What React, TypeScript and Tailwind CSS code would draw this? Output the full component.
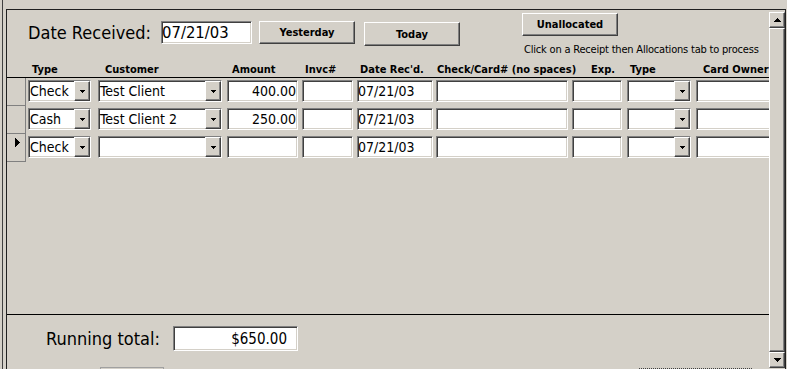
import React from "react";

const sunken =
  "bg-white border border-t-[#808080] border-l-[#808080] border-r-white border-b-white shadow-[inset_1px_1px_0_#404040,inset_-1px_-1px_0_#d4d0c8]";
const raised =
  "bg-[#d4d0c8] border border-t-white border-l-white border-r-[#404040] border-b-[#404040] shadow-[inset_-1px_-1px_0_#808080]";

function SmallDown() {
  return (
    <svg width="5" height="3" viewBox="0 0 5 3" className="block">
      <rect x="0" y="0" width="5" height="1" fill="#000" />
      <rect x="1" y="1" width="3" height="1" fill="#000" />
      <rect x="2" y="2" width="1" height="1" fill="#000" />
    </svg>
  );
}

function ScrollArrow({ up }: { up?: boolean }) {
  return (
    <svg width="7" height="4" viewBox="0 0 7 4" className="block">
      {up ? (
        <>
          <rect x="3" y="0" width="1" height="1" fill="#000" />
          <rect x="2" y="1" width="3" height="1" fill="#000" />
          <rect x="1" y="2" width="5" height="1" fill="#000" />
          <rect x="0" y="3" width="7" height="1" fill="#000" />
        </>
      ) : (
        <>
          <rect x="0" y="0" width="7" height="1" fill="#000" />
          <rect x="1" y="1" width="5" height="1" fill="#000" />
          <rect x="2" y="2" width="3" height="1" fill="#000" />
          <rect x="3" y="3" width="1" height="1" fill="#000" />
        </>
      )}
    </svg>
  );
}

function Pointer() {
  return (
    <svg width="5" height="9" viewBox="0 0 5 9" className="block">
      <rect x="0" y="0" width="1" height="9" fill="#000" />
      <rect x="1" y="1" width="1" height="7" fill="#000" />
      <rect x="2" y="2" width="1" height="5" fill="#000" />
      <rect x="3" y="3" width="1" height="3" fill="#000" />
      <rect x="4" y="4" width="1" height="1" fill="#000" />
    </svg>
  );
}

function Field({
  className,
  children,
  right,
}: {
  className: string;
  children?: React.ReactNode;
  right?: boolean;
}) {
  return (
    <div
      className={`${sunken} ${className} shrink-0 mt-[2px] h-[22px] flex items-center text-[14px] leading-[18px] whitespace-nowrap overflow-hidden ${
        right ? "justify-end pr-px" : "pl-0"
      }`}
    >
      {children}
    </div>
  );
}

function Combo({ className, value }: { className: string; value?: string }) {
  return (
    <div
      className={`${sunken} ${className} shrink-0 mt-[2px] h-[22px] flex items-stretch text-[14px] leading-[18px] whitespace-nowrap`}
    >
      <div className="flex-1 flex items-center pl-px overflow-hidden">{value}</div>
      <div className={`${raised} w-[16px] flex items-center justify-center pt-px`}>
        <SmallDown />
      </div>
    </div>
  );
}

function Btn({ className, children }: { className: string; children: React.ReactNode }) {
  return (
    <div
      className={`${raised} ${className} shrink-0 flex items-center justify-center text-[11px] leading-[13px] font-bold`}
    >
      {children}
    </div>
  );
}

type Row = {
  type: string;
  customer: string;
  amount: string;
  current?: boolean;
};

const rows: Row[] = [
  { type: "Check", customer: "Test Client", amount: "400.00" },
  { type: "Cash", customer: "Test Client 2", amount: "250.00" },
  { type: "Check", customer: "", amount: "", current: true },
];

export default function App() {
  return (
    <div className="w-[787px] h-[369px] bg-[#d4d0c8] overflow-hidden flex text-black font-['DejaVu_Sans_Condensed','DejaVu_Sans',sans-serif] [font-stretch:condensed]">
      <div className="w-[2px] shrink-0" />
      <div className="w-px shrink-0 bg-[#404040]" />
      <div className="w-[3px] shrink-0" />
      <div className="mt-[9px] w-[780px] h-[362px] shrink-0 border-t border-l border-r border-[#202020] flex">
        <div className="w-[762px] shrink-0 flex flex-col overflow-hidden">
          {/* Header */}
          <div className="h-[68px] shrink-0 border-b border-black flex flex-col">
            <div className="h-[45px] shrink-0 flex items-start">
              <div className="ml-[21px] mt-[11px] flex items-start">
                <div className="w-[133px] h-[23px] flex items-center text-[18px] leading-[18px] whitespace-nowrap">
                  Date Received:
                </div>
                <div
                  className={`${sunken} w-[91px] h-[23px] shrink-0 flex items-center text-[16.5px] leading-[18px]`}
                >
                  07/21/03
                </div>
                <Btn className="ml-[7px] w-[96px] h-[23px]">Yesterday</Btn>
                <Btn className="ml-[9px] mt-[1px] w-[96px] h-[24px]">Today</Btn>
              </div>
              <div className="ml-[62px] mt-[3px] flex flex-col items-start">
                <Btn className="w-[96px] h-[23px]">Unallocated</Btn>
                <div className="ml-[2px] mt-[7px] text-[11px] leading-[13px] tracking-[-0.2px] whitespace-nowrap">
                  Click on a Receipt then Allocations tab to process
                </div>
              </div>
            </div>
            <div className="mt-[8px] h-[13px] shrink-0 flex pl-[25px] text-[11px] leading-[13px] font-bold whitespace-nowrap">
              <div className="w-[73px] shrink-0">Type</div>
              <div className="w-[127px] shrink-0">Customer</div>
              <div className="w-[73px] shrink-0">Amount</div>
              <div className="w-[55px] shrink-0">Invc#</div>
              <div className="w-[77px] shrink-0">Date Rec'd.</div>
              <div className="w-[154px] shrink-0">Check/Card# (no spaces)</div>
              <div className="w-[39px] shrink-0">Exp.</div>
              <div className="w-[73px] shrink-0">Type</div>
              <div className="shrink-0">Card Owner</div>
            </div>
          </div>

          {/* Detail */}
          <div className="h-[236px] shrink-0 flex flex-col">
            {rows.map((r, i) => (
              <div key={i} className="h-[28px] shrink-0 flex">
                <div className="w-[19px] h-full shrink-0 border-r border-b border-[#808080] flex items-start pl-[8px] pt-[4px]">
                  {r.current && <Pointer />}
                </div>
                <Combo className="ml-[2px] w-[63px]" value={r.type} />
                <Combo className="ml-[7px] w-[124px]" value={r.customer} />
                <Field className="ml-[5px] w-[71px]" right>
                  {r.amount}
                </Field>
                <Field className="ml-[4px] w-[51px]" />
                <Field className="ml-[4px] w-[76px]">07/21/03</Field>
                <Field className="ml-[3px] w-[132px]" />
                <Field className="ml-[4px] w-[50px]" />
                <Combo className="ml-[5px] w-[64px]" />
                <Field className="ml-[5px] w-[80px]" />
              </div>
            ))}
          </div>

          {/* Footer */}
          <div className="flex-1 border-t border-black flex flex-col">
            <div className="mt-[11px] flex items-center pl-[39px]">
              <div className="w-[127px] shrink-0 text-[18px] leading-[18px] whitespace-nowrap">
                Running total:
              </div>
              <div
                className={`${sunken} w-[125px] h-[25px] shrink-0 flex items-center justify-end pr-[10px] text-[15px] leading-[18px]`}
              >
                $650.00
              </div>
            </div>
            <div className="mt-[16px] flex items-start">
              <div className="ml-[93px] w-[64px] h-[3px] shrink-0 border-t border-l border-r border-[#a0a0a0]" />
              <div className="ml-[475px] mt-px w-[113px] h-px shrink-0 border-t border-dotted border-[#404040]" />
            </div>
          </div>
        </div>

        {/* Scrollbar */}
        <div className="w-[16px] shrink-0 flex flex-col">
          <div className={`${raised} mt-[2px] h-[16px] shrink-0 flex items-center justify-center`}>
            <ScrollArrow up />
          </div>
          <div className={`${raised} h-[324px] shrink-0`} />
          <div className={`${raised} h-[16px] shrink-0 flex items-center justify-center`}>
            <ScrollArrow />
          </div>
        </div>
      </div>
    </div>
  );
}
